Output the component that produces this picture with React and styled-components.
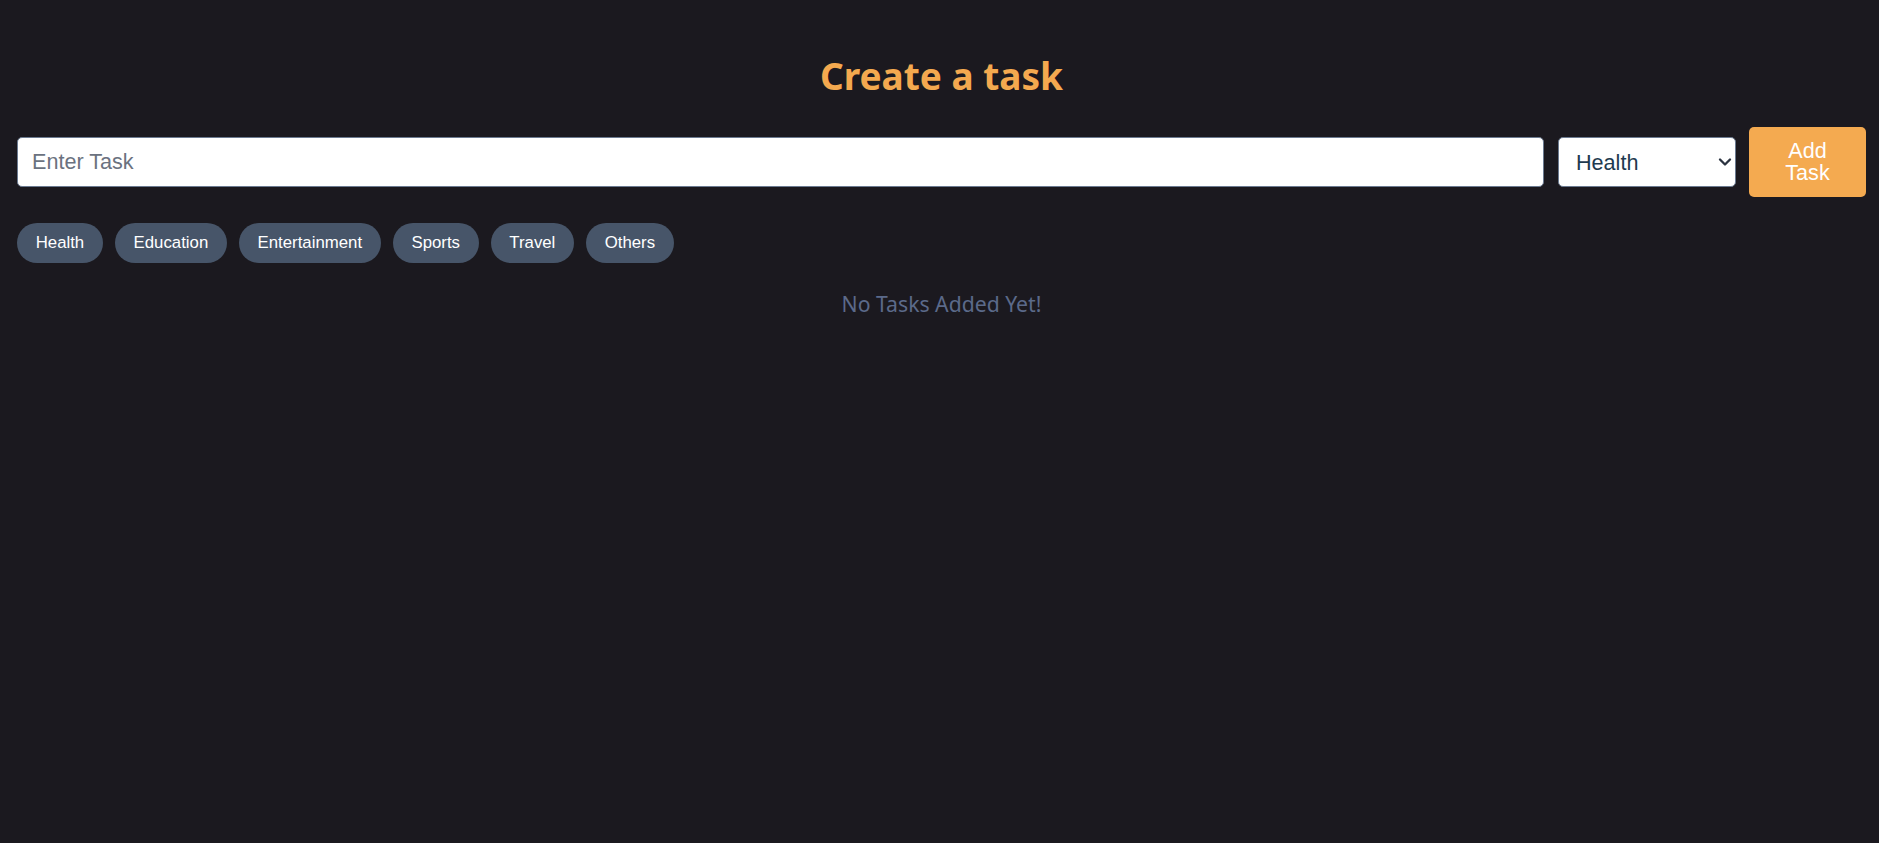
import React, { useState } from "react";
import styled, { createGlobalStyle } from "styled-components";
import { ChevronDown } from "lucide-react";

const GlobalStyle = createGlobalStyle`
  html, body {
    margin: 0;
    padding: 0;
    background-color: #1b191f;
  }
  body {
    font-family: "Noto Sans", "Open Sans", sans-serif;
  }
`;

const Page = styled.div`
  min-height: 100vh;
  box-sizing: border-box;
  padding: 51px 13px 0 17px;
  background-color: #1b191f;
`;

const Title = styled.h1`
  margin: 0 0 26px;
  text-align: center;
  font-family: "Noto Sans", "Open Sans", sans-serif;
  font-weight: 700;
  font-size: 37px;
  line-height: 1.36;
  color: #f4a94f;
`;

const FormRow = styled.form`
  display: flex;
  align-items: center;
  margin: 0;
`;

const TaskInput = styled.input`
  flex: 1;
  height: 50px;
  box-sizing: border-box;
  padding: 0 14px;
  border: 1px solid #6b7a90;
  border-radius: 5px;
  background: #fff;
  font-family: "Liberation Sans", Arial, sans-serif;
  font-size: 21.6px;
  color: #1e293b;
  outline: none;
  &::placeholder {
    color: #6b7280;
  }
`;

const SelectWrap = styled.div`
  position: relative;
  margin: 0 13px 0 14px;
  svg {
    position: absolute;
    right: 1px;
    top: 50%;
    transform: translateY(-50%);
    color: #2b3340;
    pointer-events: none;
  }
`;

const CategorySelect = styled.select`
  display: block;
  width: 178px;
  height: 50px;
  box-sizing: border-box;
  padding: 0 30px 0 17px;
  border: 1px solid #6b7a90;
  border-radius: 5px;
  background: #fff;
  appearance: none;
  font-family: "Liberation Sans", Arial, sans-serif;
  font-size: 21.6px;
  color: #1e3a4f;
  outline: none;
`;

const AddButton = styled.button`
  width: 117px;
  height: 70px;
  flex-shrink: 0;
  border: none;
  border-radius: 5px;
  background-color: #f4aa50;
  color: #fff;
  font-family: "Liberation Sans", Arial, sans-serif;
  font-size: 21.6px;
  line-height: 1.05;
  padding: 0 22px;
  cursor: pointer;
`;

const ChipRow = styled.div`
  display: flex;
  flex-wrap: wrap;
  gap: 12px;
  margin-top: 26px;
`;

const Chip = styled.button`
  height: 40px;
  padding: 0 18.7px;
  border: none;
  border-radius: 20px;
  background-color: ${(p) => (p.$active ? "#64748b" : "#475569")};
  color: #fff;
  font-family: "Liberation Sans", Arial, sans-serif;
  font-size: 16.8px;
  cursor: pointer;
`;

const EmptyText = styled.p`
  margin: 26px 0 0;
  text-align: center;
  font-family: "Noto Sans", "Open Sans", sans-serif;
  font-size: 21.2px;
  color: #5b6a8a;
`;

const categories = ["Health", "Education", "Entertainment", "Sports", "Travel", "Others"];

export default function App() {
  const [task, setTask] = useState("");
  const [category, setCategory] = useState("Health");

  return (
    <>
      <GlobalStyle />
      <Page>
        <Title>Create a task</Title>
        <FormRow onSubmit={(e) => e.preventDefault()}>
          <TaskInput
            placeholder="Enter Task"
            value={task}
            onChange={(e) => setTask(e.target.value)}
          />
          <SelectWrap>
            <CategorySelect value={category} onChange={(e) => setCategory(e.target.value)}>
              {categories.map((c) => (
                <option key={c} value={c}>
                  {c}
                </option>
              ))}
            </CategorySelect>
            <ChevronDown size={20} strokeWidth={2.8} />
          </SelectWrap>
          <AddButton type="submit">Add Task</AddButton>
        </FormRow>
        <ChipRow>
          {categories.map((c) => (
            <Chip key={c} type="button">
              {c}
            </Chip>
          ))}
        </ChipRow>
        <EmptyText>No Tasks Added Yet!</EmptyText>
      </Page>
    </>
  );
}
